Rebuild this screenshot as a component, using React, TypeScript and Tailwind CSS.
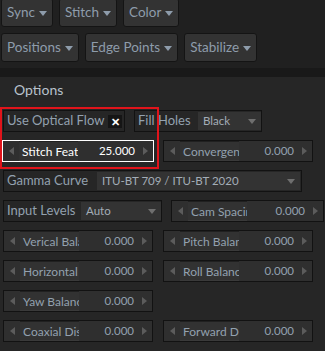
import { ReactNode } from "react";

const font = { fontFamily: 'Lato, "Open Sans", sans-serif' };

function Caret({ className = "" }: { className?: string }) {
  return (
    <svg width="8" height="5" viewBox="0 0 8 5" className={className}>
      <path d="M0 0h8L4 5z" fill="currentColor" />
    </svg>
  );
}

function MenuButton({ label }: { label: string }) {
  return (
    <button className="flex h-[29px] items-center gap-[4px] whitespace-nowrap rounded-[3px] border border-[#141414] bg-[#333333] pl-[5px] pr-[5px] text-[13.5px] text-[#8e9cab]">
      {label}
      <Caret className="mt-[1px] text-[#8e9cab]" />
    </button>
  );
}

function Arrow({ dir }: { dir: "l" | "r" }) {
  return (
    <svg width="5" height="8" viewBox="0 0 5 8">
      <path d={dir === "l" ? "M5 0v8L0 4z" : "M0 0v8l5-4z"} fill="#5c5c5c" />
    </svg>
  );
}

function NumField({
  label,
  value = "0.000",
  active,
  width = "w-[150px]",
}: {
  label: string;
  value?: string;
  active?: boolean;
  width?: string;
}) {
  const text = active ? "text-white" : "text-[#93a1af]";
  return (
    <div
      className={`flex h-[22px] shrink-0 ${width} items-center border ${
        active ? "border-white" : "border-[#121212]"
      } bg-[#2f2f2f]`}
    >
      <div className="flex w-[16px] shrink-0 justify-center">
        <Arrow dir="l" />
      </div>
      <div
        className={`h-full w-[59px] shrink-0 overflow-hidden whitespace-nowrap border-t border-t-[#202020] border-b border-b-[#3a3a3a] bg-[#323232] pl-[3px] text-[12px] leading-[19px] ${text}`}
      >
        {label}
      </div>
      <div className={`flex-1 whitespace-nowrap pr-[2px] text-right text-[11.5px] ${text}`}>
        {value}
      </div>
      <div className="flex w-[16px] shrink-0 justify-center">
        <Arrow dir="r" />
      </div>
    </div>
  );
}

function Dropdown({ value, className }: { value: string; className: string }) {
  return (
    <div
      className={`flex h-[18px] shrink-0 items-center justify-between whitespace-nowrap bg-[#333333] pl-[5px] pr-[5px] text-[11.5px] text-[#a3adb7] ${className}`}
    >
      <span>{value}</span>
      <Caret className="text-[#6f6f6f]" />
    </div>
  );
}

function Box({ children, className }: { children: ReactNode; className: string }) {
  return (
    <div className={`flex h-[22px] shrink-0 items-center border border-[#121212] ${className}`}>
      {children}
    </div>
  );
}

const labelCls = "shrink-0 whitespace-nowrap text-[13px] text-[#93a1af]";

export default function App() {
  return (
    <div style={font} className="h-[351px] w-[325px] overflow-hidden bg-[#202020]">
      <div className="-mt-[2px] flex flex-col gap-[6px] px-[1px]">
        <div className="flex gap-[6px]">
          <MenuButton label="Sync" />
          <MenuButton label="Stitch" />
          <MenuButton label="Color" />
        </div>
        <div className="flex gap-[6px]">
          <MenuButton label="Positions" />
          <MenuButton label="Edge Points" />
          <MenuButton label="Stabilize" />
        </div>
      </div>
      <div className="mt-[6px] h-[9px] bg-[#191919]" />
      <div className="relative h-full bg-[#262626] pl-[3px]">
        <div className="pl-[11px] pt-[2px] text-[14px] leading-[22px] text-[#b8c2cc]">Options</div>
        <div className="mt-[9px] flex flex-col gap-[8px]">
          <div className="flex gap-[9px]">
            <Box className="w-[122px] justify-between pl-[3px] pr-[2px]">
              <span className={labelCls}>Use Optical Flow</span>
              <span className="flex h-[13px] w-[14px] items-center justify-center bg-[#151515] text-[11px] font-bold leading-none text-white">
                ✕
              </span>
            </Box>
            <Box className="w-[128px] pl-[3px]">
              <span className={`${labelCls} w-[60px]`}>Fill Holes</span>
              <Dropdown value="Black" className="w-[63px] pr-[4px]" />
            </Box>
          </div>
          <div className="-ml-[1px] flex gap-[9px]">
            <NumField label="Stitch Feather" value="25.000" active width="w-[152px]" />
            <NumField label="Convergence" />
          </div>
          <Box className="w-[299px] pl-[3px]">
            <span className={`${labelCls} w-[90px]`}>Gamma Curve</span>
            <Dropdown value="ITU-BT 709 / ITU-BT 2020" className="w-[203px]" />
          </Box>
          <div className="flex gap-[9px]">
            <Box className="w-[159px] pl-[3px]">
              <span className={`${labelCls} w-[74px]`}>Input Levels</span>
              <Dropdown value="Auto" className="w-[80px]" />
            </Box>
            <NumField label="Cam Spacing" width="w-[153px]" />
          </div>
          <div className="flex gap-[10px]">
            <NumField label="Verical Balance" />
            <NumField label="Pitch Balance" />
          </div>
          <div className="flex gap-[10px]">
            <NumField label="Horizontal Balance" />
            <NumField label="Roll Balance" />
          </div>
          <div className="flex gap-[10px]">
            <NumField label="Yaw Balance" />
          </div>
          <div className="flex gap-[10px]">
            <NumField label="Coaxial Distance" />
            <NumField label="Forward Distance" />
          </div>
        </div>
        <div className="pointer-events-none absolute left-0 top-[30px] h-[62px] w-[159px] border-2 border-[#e0141b]" />
      </div>
    </div>
  );
}
